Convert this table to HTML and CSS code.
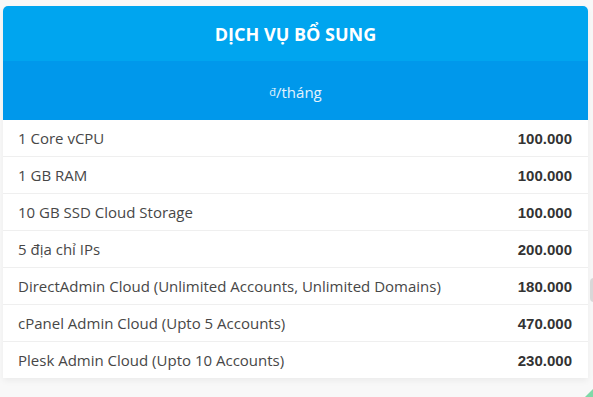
FILE: index.html
```html
<!DOCTYPE html>
<html lang="vi">
<head>
<meta charset="utf-8">
<title>Dịch vụ bổ sung</title>
<link rel="stylesheet" href="styles.css">
</head>
<body>
<div class="page">
  <section class="card">
    <header class="card-title">DỊCH VỤ BỔ SUNG</header>
    <div class="card-sub"><sup>đ</sup>/tháng</div>
    <ul class="rows">
      <li class="row"><span class="name">1 Core vCPU</span><span class="price">100.000</span></li>
      <li class="row"><span class="name">1 GB RAM</span><span class="price">100.000</span></li>
      <li class="row"><span class="name">10 GB SSD Cloud Storage</span><span class="price">100.000</span></li>
      <li class="row"><span class="name">5 địa chỉ IPs</span><span class="price">200.000</span></li>
      <li class="row"><span class="name">DirectAdmin Cloud (Unlimited Accounts, Unlimited Domains)</span><span class="price">180.000</span></li>
      <li class="row"><span class="name">cPanel Admin Cloud (Upto 5 Accounts)</span><span class="price">470.000</span></li>
      <li class="row"><span class="name">Plesk Admin Cloud (Upto 10 Accounts)</span><span class="price">230.000</span></li>
    </ul>
  </section>
  <span class="edge-knob"></span>
  <span class="edge-corner"></span>
</div>
</body>
</html>
```

FILE: styles.css
```css
html, body {
  margin: 0;
  padding: 0;
  background: #f8f8f8;
}
body {
  font-family: "Open Sans", "Liberation Sans", sans-serif;
  width: 593px;
  height: 397px;
  overflow: hidden;
}
.page {
  position: relative;
  height: 397px;
  padding: 6px 5px 0 3px;
  box-sizing: border-box;
}
.card {
  width: 585px;
  background: #fff;
  border-radius: 5px 5px 0 0;
  overflow: hidden;
  box-shadow: 0 3px 6px rgba(0, 0, 0, 0.05);
}
.card-title {
  height: 55px;
  background: #00a5ef;
  color: #fff;
  font-weight: 700;
  font-size: 18px;
  display: flex;
  align-items: center;
  justify-content: center;
  padding-top: 1px;
  box-sizing: border-box;
}
.card-sub {
  height: 59px;
  background: #0098eb;
  color: #e3f3fd;
  font-size: 15px;
  display: flex;
  align-items: center;
  justify-content: center;
  padding-top: 3px;
  box-sizing: border-box;
}
.card-sub sup {
  font-size: 11px;
  position: relative;
  top: -1px;
}
.rows {
  list-style: none;
  margin: 0;
  padding: 0;
}
.row {
  height: 37px;
  display: flex;
  align-items: center;
  justify-content: space-between;
  padding: 0 16px 0 15px;
  border-bottom: 1px solid #efefef;
  box-sizing: border-box;
}
.row:last-child {
  border-bottom: none;
  height: 36px;
}
.name {
  font-size: 15px;
  color: #474747;
}
.price {
  font-family: "Liberation Sans", Arial, sans-serif;
  font-weight: 700;
  font-size: 15px;
  color: #333;
}
.edge-knob {
  position: absolute;
  left: 590px;
  top: 278px;
  width: 8px;
  height: 24px;
  border-radius: 4px;
  background: #d8d8d8;
}
.edge-corner {
  position: absolute;
  left: 585px;
  top: 389px;
  width: 0;
  height: 0;
  border-left: 8px solid transparent;
  border-bottom: 8px solid #7fd9a8;
}
```
